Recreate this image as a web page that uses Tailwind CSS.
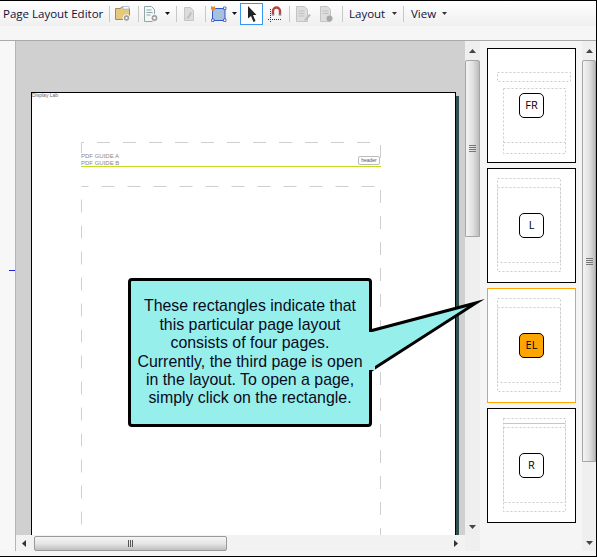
<!DOCTYPE html>
<html lang="en">
  <head>
    <meta charset="UTF-8" />
    <title>Page Layout Editor</title>
    <script src="https://cdn.jsdelivr.net/npm/@tailwindcss/browser@4"></script>
  </head>
  <body class="bg-white">
    <div class="relative flex h-[557px] w-[597px] flex-col overflow-hidden border-t border-r border-b border-black bg-[#f5f5f5] font-['Open_Sans',sans-serif] text-[11.5px] text-[#10103a]">
      <!-- toolbar -->
      <div class="flex h-[25px] items-center bg-linear-to-b from-white to-[#efefef] pl-[3px]">
        <span class="w-[106px] whitespace-nowrap">Page Layout Editor</span>
        <span class="h-[16px] w-px bg-[#c8c8c8]"></span>
        <svg class="ml-[5px] h-[16px] w-[16px]" viewBox="0 0 16 16">
          <path d="M.5 2.500h5l1-1.500h7l1 3v9.500H.5z" fill="#e6c77e" stroke="#a88a4a" />
          <path d="M8 .5h6v2.500H8z" fill="#fff" stroke="#8fb0d8" stroke-width=".6" />
          <circle cx="11.500" cy="12" r="3.400" fill="#a0a0a0" stroke="#fff" />
          <circle cx="11.500" cy="12" r="1.100" fill="#fff" />
        </svg>
        <span class="ml-[7px] h-[16px] w-px bg-[#c8c8c8]"></span>
        <svg class="ml-[5px] h-[16px] w-[15px]" viewBox="0 0 15 16">
          <path d="M.5.5h7l3 3v12H.5z" fill="#f2f7f7" stroke="#8fa6a6" />
          <path d="M2.500 4h5M2.500 6.500h6M2.500 9h4" stroke="#8fa6a6" />
          <circle cx="10.500" cy="12" r="3.600" fill="#a0a0a0" stroke="#fff" />
          <circle cx="10.500" cy="12" r="1.200" fill="#fff" />
        </svg>
        <svg class="ml-[6px] h-[3px] w-[5px]" viewBox="0 0 5 3"><path d="M0 0h5L2.500 3z" fill="#111" /></svg>
        <span class="ml-[6px] h-[16px] w-px bg-[#c8c8c8]"></span>
        <svg class="ml-[7px] h-[14px] w-[10px]" viewBox="0 0 10 14">
          <path d="M.5.5h6l3 3v10H.5z" fill="#dcdcdc" stroke="#c6c6c6" />
          <path d="M2.500 11l3-4 .5-2 2 1-1 2-3 4z" fill="#bcbcbc" />
        </svg>
        <span class="ml-[11px] h-[16px] w-px bg-[#c8c8c8]"></span>
        <svg class="ml-[5px] h-[16px] w-[16px]" viewBox="0 0 16 16">
          <rect x="1.500" y="2.500" width="12.500" height="12" fill="#a6c0df" stroke="#3056c8" />
          <path d="M0 0l2 1 2-1v2l1 1-2 1-1 2-1-2-2-1 1-1z" fill="#f08a1c" />
          <path d="M12.500 1h2.500v2.500h-2.500zM.5 13h2.500v2.500H.5zM12.500 13h2.500v2.500h-2.500z" fill="#fff" stroke="#3056c8" stroke-width=".8" />
        </svg>
        <svg class="ml-[5px] h-[3px] w-[5px]" viewBox="0 0 5 3"><path d="M0 0h5L2.500 3z" fill="#111" /></svg>
        <span class="ml-[3px] flex h-[22px] w-[23px] items-center justify-center border border-[#3a96ec] bg-white">
          <svg class="h-[16px] w-[10px]" viewBox="0 0 10 16"><path d="M1 0l8.500 9H6l2.500 6-2 1-2.500-6L1 12.500z" fill="#222" /></svg>
        </span>
        <svg class="ml-[5px] h-[18px] w-[14px]" viewBox="0 0 14 18">
          <path d="M5 10V6a3.500 3.500 0 0 1 7 0v4" fill="none" stroke="#b8443e" stroke-width="2.400" />
          <path d="M3.800 10h2.400M10.800 10h2.400" stroke="#8a9bc0" stroke-width="1.500" />
          <path d="M0 14.500h14M2.500 17V3" stroke="#333" stroke-dasharray="1 1" fill="none" />
        </svg>
        <span class="ml-[7px] h-[16px] w-px bg-[#c8c8c8]"></span>
        <svg class="ml-[6px] h-[16px] w-[15px]" viewBox="0 0 15 16">
          <path d="M.5.5h8l3 3v12H.5z" fill="#dedede" stroke="#c4c4c4" />
          <path d="M2.500 5h6M2.500 7.500h6M2.500 10h6" stroke="#c0c0c0" />
          <path d="M8 14l5-6 2 1-5 6z" fill="#bdbdbd" />
        </svg>
        <svg class="ml-[9px] h-[16px] w-[13px]" viewBox="0 0 13 16">
          <path d="M.5.5h7l3 3v12H.5z" fill="#dedede" stroke="#c4c4c4" />
          <path d="M2.500 5h6M2.500 7.500h6" stroke="#c0c0c0" />
          <circle cx="9.500" cy="12.500" r="3" fill="#a8a8a8" />
        </svg>
        <span class="ml-[9px] h-[16px] w-px bg-[#c8c8c8]"></span>
        <span class="ml-[6px] w-[37px]">Layout</span>
        <svg class="ml-[6px] h-[3px] w-[5px]" viewBox="0 0 5 3"><path d="M0 0h5L2.500 3z" fill="#333" /></svg>
        <span class="ml-[6px] h-[16px] w-px bg-[#c8c8c8]"></span>
        <span class="ml-[7px] w-[26px]">View</span>
        <svg class="ml-[5px] h-[3px] w-[5px]" viewBox="0 0 5 3"><path d="M0 0h5L2.500 3z" fill="#333" /></svg>
      </div>
      <div class="h-[15px] border-b border-[#a9a9a9] bg-[#f6f6f6]"></div>

      <!-- main area -->
      <div class="flex min-h-0 flex-1">
        <!-- left ruler -->
        <div class="relative w-[16px] shrink-0 border-r border-[#b4b4b4] bg-[#f7f7f7]">
          <span class="absolute top-[229px] left-[9px] h-px w-[6px] bg-[#2222dd]"></span>
        </div>

        <div class="flex w-[449px] shrink-0 flex-col">
          <!-- canvas -->
          <div class="relative h-[494px] overflow-hidden bg-[#d0d0d0]">
            <span class="absolute top-[55px] left-[440px] h-[440px] w-[3px] bg-[#2f4f4f]"></span>
            <div class="absolute top-[51px] left-[15px] h-[460px] w-[425px] border-t border-r border-l border-black bg-white">
              <span class="absolute top-0 left-0 whitespace-nowrap font-['Liberation_Sans',sans-serif] text-[5px] leading-[5px] text-[#666]">Display Lab</span>
              <svg class="absolute top-0 left-0" width="425" height="460">
                <path d="M49.500 60V49.500H348.500V73" fill="none" stroke="#cfcfcf" stroke-dasharray="13 13" />
                <path d="M348.500 93.500H49.500" fill="none" stroke="#cfcfcf" stroke-dasharray="13 13" stroke-dashoffset="20" />
                <path d="M49.500 93.500V450" fill="none" stroke="#cfcfcf" stroke-dasharray="13 13" stroke-dashoffset="13" />
                <path d="M348.500 97V450" fill="none" stroke="#cfcfcf" stroke-dasharray="13 13" />
                <path d="M49 73.500H349" stroke="#c5dc1e" />
              </svg>
              <span class="absolute top-[60px] left-[49px] whitespace-nowrap font-['Liberation_Sans',sans-serif] text-[6px] leading-[7px] text-[#888]">PDF GUIDE A</span>
              <span class="absolute top-[67px] left-[49px] whitespace-nowrap font-['Liberation_Sans',sans-serif] text-[6px] leading-[7px] text-[#888]">PDF GUIDE B</span>
              <span class="absolute top-[63px] left-[326px] flex h-[9px] w-[22px] items-center justify-center rounded-[2px] border border-[#bbb] bg-white font-['Liberation_Sans',sans-serif] text-[5px] text-[#555]">header</span>
            </div>
          </div>
          <!-- horizontal scrollbar -->
          <div class="flex h-[16px] items-center bg-[#f2f2f2] pr-[7px]">
            <svg class="ml-[6px] h-[7px] w-[4px]" viewBox="0 0 4 7"><path d="M4 0v7L0 3.500z" fill="#333" /></svg>
            <div class="ml-[8px] flex h-[15px] w-[193px] items-center justify-center rounded-[2px] border border-[#9a9a9a] bg-linear-to-b from-[#f5f5f5] via-[#e6e6e6] to-[#bfbfbf]">
              <span class="h-[7px] w-px bg-[#555]"></span><span class="ml-px h-[7px] w-px bg-[#555]"></span><span class="ml-px h-[7px] w-px bg-[#555]"></span>
            </div>
            <svg class="ml-auto h-[7px] w-[4px]" viewBox="0 0 4 7"><path d="M0 0v7l4-3.500z" fill="#333" /></svg>
          </div>
        </div>

        <!-- thumbnail scrollbar -->
        <div class="relative w-[15px] shrink-0 bg-[#efefef]">
          <svg class="absolute top-[8px] left-[4px] h-[4px] w-[7px]" viewBox="0 0 7 4"><path d="M3.500 0L7 4H0z" fill="#444" /></svg>
          <div class="absolute top-[19px] left-0 flex h-[177px] w-[15px] flex-col items-center justify-center gap-px rounded-t-[2px] border border-[#a5a5a5] bg-linear-to-r from-[#f4f4f4] via-[#e2e2e2] to-[#bcbcbc]">
            <span class="h-px w-[7px] bg-[#777]"></span><span class="h-px w-[7px] bg-[#777]"></span><span class="h-px w-[7px] bg-[#777]"></span><span class="h-px w-[7px] bg-[#777]"></span>
          </div>
          <svg class="absolute top-[484px] left-[4px] h-[4px] w-[7px]" viewBox="0 0 7 4"><path d="M0 0h7L3.500 4z" fill="#444" /></svg>
        </div>

        <!-- page thumbnails -->
        <div class="flex w-[102px] shrink-0 flex-col gap-[5px] pt-[7px] pl-[7px] text-[11px] text-black">
          <div class="relative h-[115px] w-[89px] border border-black bg-white">
            <svg class="absolute top-0 left-0" width="87" height="113" fill="none" stroke="#cccccc" stroke-dasharray="2 2">
              <rect x="9.500" y="23.500" width="73" height="9" />
              <rect x="15.500" y="39.500" width="62" height="65" />
              <path d="M15.500 93.500H77.500" />
            </svg>
            <span class="absolute top-[44px] left-[31px] flex h-[25px] w-[25px] items-center justify-center rounded-[5px] border border-black bg-white">FR</span>
          </div>
          <div class="relative h-[115px] w-[89px] border border-black bg-white">
            <svg class="absolute top-0 left-0" width="87" height="113" fill="none" stroke="#cccccc" stroke-dasharray="2 2">
              <rect x="9.500" y="9.500" width="63" height="93" />
              <rect x="9.500" y="18.500" width="63" height="75" />
            </svg>
            <span class="absolute top-[44px] left-[31px] flex h-[25px] w-[25px] items-center justify-center rounded-[5px] border border-black bg-white">L</span>
          </div>
          <div class="relative h-[115px] w-[89px] border border-[#ffa500] bg-white">
            <svg class="absolute top-0 left-0" width="87" height="113" fill="none" stroke="#cccccc" stroke-dasharray="2 2">
              <rect x="9.500" y="9.500" width="63" height="93" />
              <rect x="9.500" y="18.500" width="63" height="75" />
            </svg>
            <span class="absolute top-[44px] left-[31px] flex h-[25px] w-[25px] items-center justify-center rounded-[5px] border border-black bg-[#ffa500]">EL</span>
          </div>
          <div class="relative h-[115px] w-[89px] border border-black bg-white">
            <svg class="absolute top-0 left-0" width="87" height="113" fill="none" stroke="#cccccc" stroke-dasharray="2 2">
              <rect x="15.500" y="9.500" width="62" height="93" />
              <rect x="15.500" y="18.500" width="62" height="75" />
              <path d="M15.500 14.500H77.500" stroke="#c5d86d" stroke-dasharray="none" />
            </svg>
            <span class="absolute top-[44px] left-[31px] flex h-[25px] w-[25px] items-center justify-center rounded-[5px] border border-black bg-white">R</span>
          </div>
        </div>

        <!-- panel scrollbar -->
        <div class="relative w-[14px] shrink-0 bg-[#efefef]">
          <svg class="absolute top-[8px] left-[4px] h-[4px] w-[7px]" viewBox="0 0 7 4"><path d="M3.500 0L7 4H0z" fill="#444" /></svg>
          <div class="absolute top-[19px] left-0 flex h-[402px] w-[14px] flex-col items-center justify-center gap-px rounded-t-[2px] border border-[#a5a5a5] bg-linear-to-r from-[#f4f4f4] via-[#e2e2e2] to-[#bcbcbc]">
            <span class="h-px w-[7px] bg-[#777]"></span><span class="h-px w-[7px] bg-[#777]"></span><span class="h-px w-[7px] bg-[#777]"></span><span class="h-px w-[7px] bg-[#777]"></span>
          </div>
          <svg class="absolute top-[500px] left-[4px] h-[4px] w-[7px]" viewBox="0 0 7 4"><path d="M0 0h7L3.500 4z" fill="#444" /></svg>
        </div>
      </div>
      <div class="h-[5px]"></div>

      <!-- callout -->
      <svg class="absolute top-[294px] left-[366px] overflow-visible" width="114" height="84" viewBox="0 0 114 84">
        <path d="M4 36L110 8 4 76z" fill="#97efec" stroke="#000" stroke-width="3" stroke-miterlimit="10" />
      </svg>
      <div class="absolute top-[277px] left-[128px] flex h-[149px] w-[244px] items-center justify-center rounded-[4px] border-[3px] border-black bg-[#97efec] text-center font-['Liberation_Sans',sans-serif] text-[15.9px] leading-[18.4px] text-[#0a0a20]">
        <p>These rectangles indicate that<br />this particular page layout<br />consists of four pages.<br />Currently, the third page is open<br />in the layout. To open a page,<br />simply click on the rectangle.</p>
      </div>
      <!-- hides the tail's base where it meets the box -->
      <span class="absolute top-[331px] left-[369px] h-[38px] w-[6px] bg-[#97efec]"></span>
    </div>
  </body>
</html>
